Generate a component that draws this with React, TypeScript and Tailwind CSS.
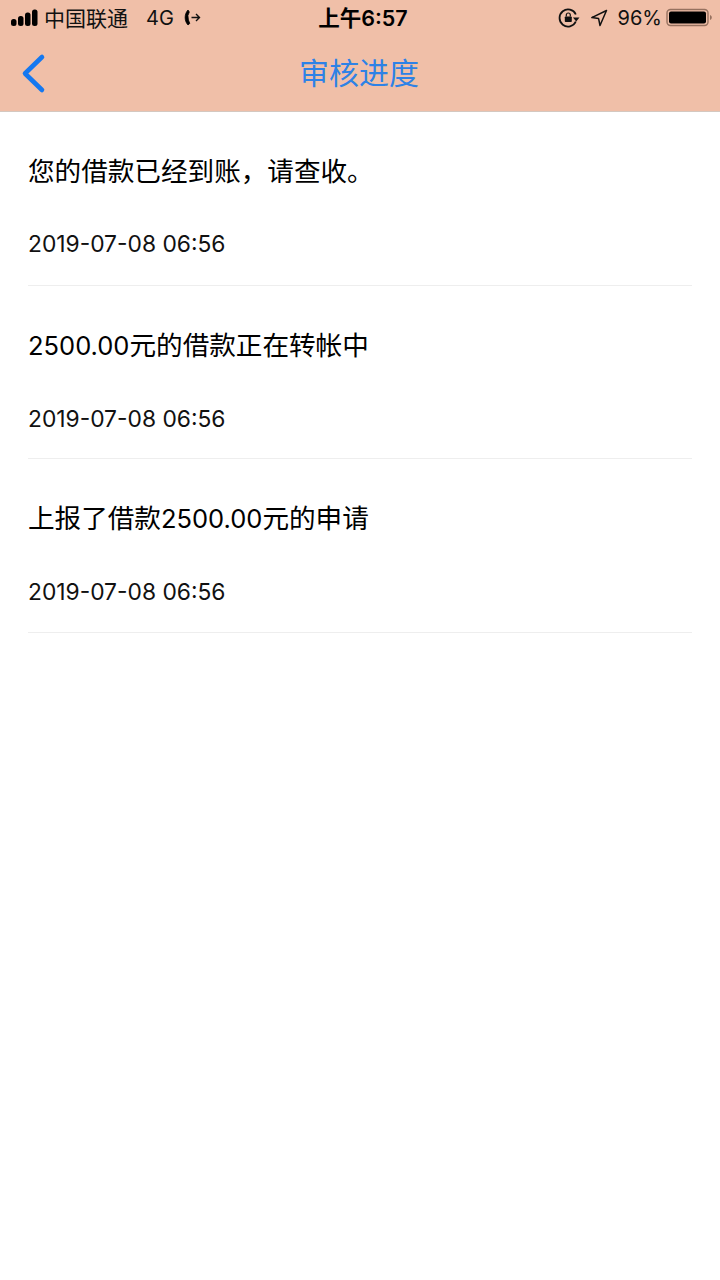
const cjk = "font-['Inter','Noto_Sans_CJK_SC',sans-serif]";

const rows = [
  <>您的借款已经到账，请查收。</>,
  <><span className="text-[25.5px]">2500.00</span>元的借款正在转帐中</>,
  <>上报了借款<span className="text-[25.5px]">2500.00</span>元的申请</>,
];

function Signal() {
  return (
    <svg width="30" height="18" viewBox="0 0 30 18" className="ml-[10px]">
      <rect x="1" y="10" width="5.5" height="7" rx="2.5" fill="#000" />
      <rect x="8" y="7" width="5.5" height="10" rx="2.5" fill="#000" />
      <rect x="15" y="3.5" width="5.5" height="13.5" rx="2.5" fill="#000" />
      <rect x="22" y="0.5" width="5.5" height="16.5" rx="2.5" fill="#000" />
    </svg>
  );
}

function CallForward() {
  return (
    <svg width="20" height="20" viewBox="0 0 20 20" className="ml-[9px]" fill="none">
      <path d="M5 2C1.2 6 1.2 13 5 17L6.8 15.4 5.4 12 4.9 7.5 6.3 4Z" fill="#000" stroke="#000" strokeWidth="0.8" strokeLinejoin="round" />
      <path d="M8.5 9.5H16.5M13 6L16.5 9.5L13 13" stroke="#111" strokeWidth="1.4" />
    </svg>
  );
}

function RotationLock() {
  return (
    <svg width="22" height="22" viewBox="0 0 22 22" fill="none">
      <path d="M17.8 7.5A8.5 8.5 0 1 0 17.8 14.5" stroke="#111" strokeWidth="1.8" />
      <path d="M15 10.5L21.5 10.5L18.2 14.5Z" fill="#111" />
      <rect x="6.8" y="9.5" width="7" height="5.5" rx="0.8" fill="#111" />
      <path d="M8.3 9.5V8a2 2 0 0 1 4 0v1.5" stroke="#111" strokeWidth="1.2" />
    </svg>
  );
}

function Location() {
  return (
    <svg width="18" height="18" viewBox="0 0 18 18" fill="none" className="ml-[10px]">
      <path d="M16.5 1.5L1.8 8.6L8.6 9.6L10 16.5Z" stroke="#111" strokeWidth="1.5" strokeLinejoin="round" />
    </svg>
  );
}

function Battery() {
  return (
    <svg width="48" height="20" viewBox="0 0 48 20" fill="none" className="ml-[4px]">
      <rect x="1" y="1.5" width="41" height="16" rx="3.5" stroke="#96715f" strokeWidth="1.4" />
      <rect x="3" y="3.5" width="37" height="12" rx="2" fill="#000" />
      <path d="M44 7V12C45.2 11.6 45.8 10.6 45.8 9.5C45.8 8.4 45.2 7.4 44 7Z" fill="#96715f" />
    </svg>
  );
}

export default function App() {
  return (
    <div className={`w-[720px] h-[1280px] bg-white text-[#111] ${cjk}`}>
      <header className="relative h-[112px] bg-[#f0bfa8] border-b border-[#d4c8c0]">
        <div className="h-[36px] flex items-center relative">
          <Signal />
          <span className="ml-[4px] text-[21px] leading-none text-[#111]">中国联通</span>
          <span className="ml-[18px] text-[20px] leading-none text-[#111]">4G</span>
          <CallForward />
          <span className="absolute left-[6px] right-0 top-[8px] text-center text-[21.5px] leading-none font-semibold text-[#000]">
            上午6:57
          </span>
          <div className="ml-auto flex items-center pr-[6px]">
            <RotationLock />
            <Location />
            <span className="ml-[10px] text-[20px] leading-none text-[#111]">96%</span>
            <Battery />
          </div>
        </div>
        <div className="h-[75px] flex items-center justify-center relative">
          <svg width="28" height="42" viewBox="0 0 28 42" fill="none" className="absolute left-[20px] top-[16px]">
            <path d="M22 5L5 21.5L22 38" stroke="#1578f0" strokeWidth="4.6" strokeLinecap="round" strokeLinejoin="round" />
          </svg>
          <span className="text-[30px] leading-none text-[#2e82e6] mb-[2px] mr-[2px]">审核进度</span>
        </div>
      </header>
      <main className="px-[28px]">
        {rows.map((t, i) => (
          <div key={i} className="h-[173.7px] border-b border-[#eeeeee] pt-[40px]">
            <div className="text-[26.6px] leading-[38px] text-[#000]">{t}</div>
            <div className="mt-[39px] text-[22.8px] leading-[30px] text-[#111]">2019-07-08 06:56</div>
          </div>
        ))}
      </main>
    </div>
  );
}
